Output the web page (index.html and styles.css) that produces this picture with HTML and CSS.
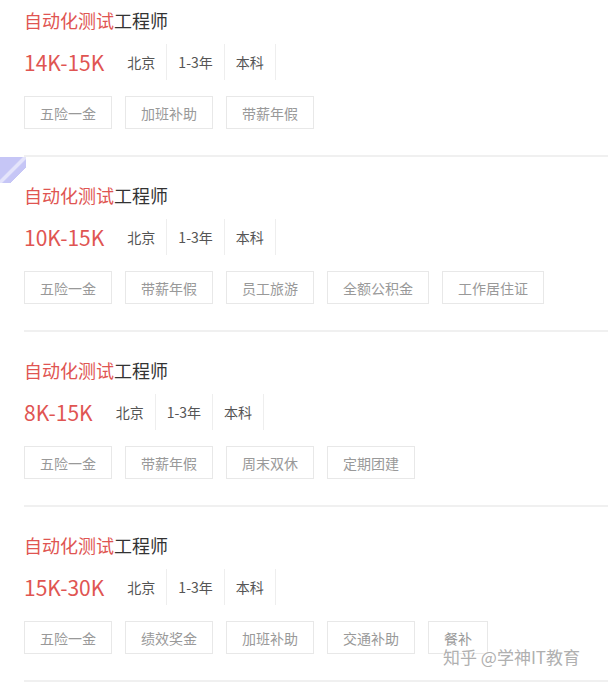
FILE: index.html
```html
<!DOCTYPE html>
<html lang="zh-CN">
<head>
    <meta charset="UTF-8">
    <meta name="viewport" content="width=device-width, initial-scale=1.0">
    <title>自动化测试工程师 职位列表</title>
    <link rel="stylesheet" href="styles.css">
</head>
<body>
    <ul class="job-list">
        <li class="job">
            <h3 class="job-title"><em>自动化测试</em>工程师</h3>
            <div class="job-info">
                <span class="salary">14K-15K</span>
                <span class="info-item">北京</span>
                <span class="info-item">1-3年</span>
                <span class="info-item">本科</span>
            </div>
            <div class="tags">
                <span class="tag">五险一金</span>
                <span class="tag">加班补助</span>
                <span class="tag">带薪年假</span>
            </div>
        </li>
        <li class="job">
            <span class="corner"></span>
            <h3 class="job-title"><em>自动化测试</em>工程师</h3>
            <div class="job-info">
                <span class="salary">10K-15K</span>
                <span class="info-item">北京</span>
                <span class="info-item">1-3年</span>
                <span class="info-item">本科</span>
            </div>
            <div class="tags">
                <span class="tag">五险一金</span>
                <span class="tag">带薪年假</span>
                <span class="tag">员工旅游</span>
                <span class="tag">全额公积金</span>
                <span class="tag">工作居住证</span>
            </div>
        </li>
        <li class="job">
            <h3 class="job-title"><em>自动化测试</em>工程师</h3>
            <div class="job-info">
                <span class="salary">8K-15K</span>
                <span class="info-item">北京</span>
                <span class="info-item">1-3年</span>
                <span class="info-item">本科</span>
            </div>
            <div class="tags">
                <span class="tag">五险一金</span>
                <span class="tag">带薪年假</span>
                <span class="tag">周末双休</span>
                <span class="tag">定期团建</span>
            </div>
        </li>
        <li class="job">
            <h3 class="job-title"><em>自动化测试</em>工程师</h3>
            <div class="job-info">
                <span class="salary">15K-30K</span>
                <span class="info-item">北京</span>
                <span class="info-item">1-3年</span>
                <span class="info-item">本科</span>
            </div>
            <div class="tags">
                <span class="tag">五险一金</span>
                <span class="tag">绩效奖金</span>
                <span class="tag">加班补助</span>
                <span class="tag">交通补助</span>
                <span class="tag">餐补</span>
            </div>
        </li>
    </ul>

    <div class="watermark">知乎 @学神IT教育</div>
</body>
</html>
```

FILE: styles.css
```css
body {
    margin: 0;
    background: #fff;
    font-family: "Microsoft YaHei", "Noto Sans CJK SC", "Noto Sans", sans-serif;
    color: #333;
    overflow: hidden;
}
.job-list {
    list-style: none;
    margin: -18px 0 0 0;
    padding: 0;
}
.job {
    position: relative;
    margin-left: 24px;
    padding-top: 26px;
    height: 147px;
    border-bottom: 2px solid #f0f0f0;
}
.job-title {
    margin: 0;
    font-size: 18px;
    font-weight: normal;
    line-height: 24px;
    color: #333;
}
.job-title em {
    font-style: normal;
    color: #e05552;
}
.job-info {
    display: flex;
    align-items: center;
    height: 36px;
    margin-top: 12px;
}
.salary {
    font-size: 21px;
    color: #e05552;
    margin-right: 12px;
}
.info-item {
    display: flex;
    align-items: center;
    height: 36px;
    padding: 0 11px;
    font-size: 14px;
    color: #555;
    border-right: 1px solid #eeeeee;
}
.tags {
    display: flex;
    gap: 13px;
    margin-top: 16px;
}
.tag {
    display: flex;
    align-items: center;
    height: 31px;
    padding: 0 15px;
    font-size: 14px;
    color: #999;
    border: 1px solid #e8e8e8;
}
.corner {
    position: absolute;
    left: -24px;
    top: 0;
    width: 26px;
    height: 26px;
    background: linear-gradient(135deg, #c6c6f6 0, #c6c6f6 42%, #e4e4fb 46%, #e4e4fb 52%, #c6c6f6 56%, #c6c6f6 70%, transparent 70%);
}
.watermark {
    position: absolute;
    left: 443px;
    top: 644px;
    font-size: 17px;
    color: #b0b0b0;
    text-shadow: 0 0 2px #fff, 0 0 2px #fff;
}
```
